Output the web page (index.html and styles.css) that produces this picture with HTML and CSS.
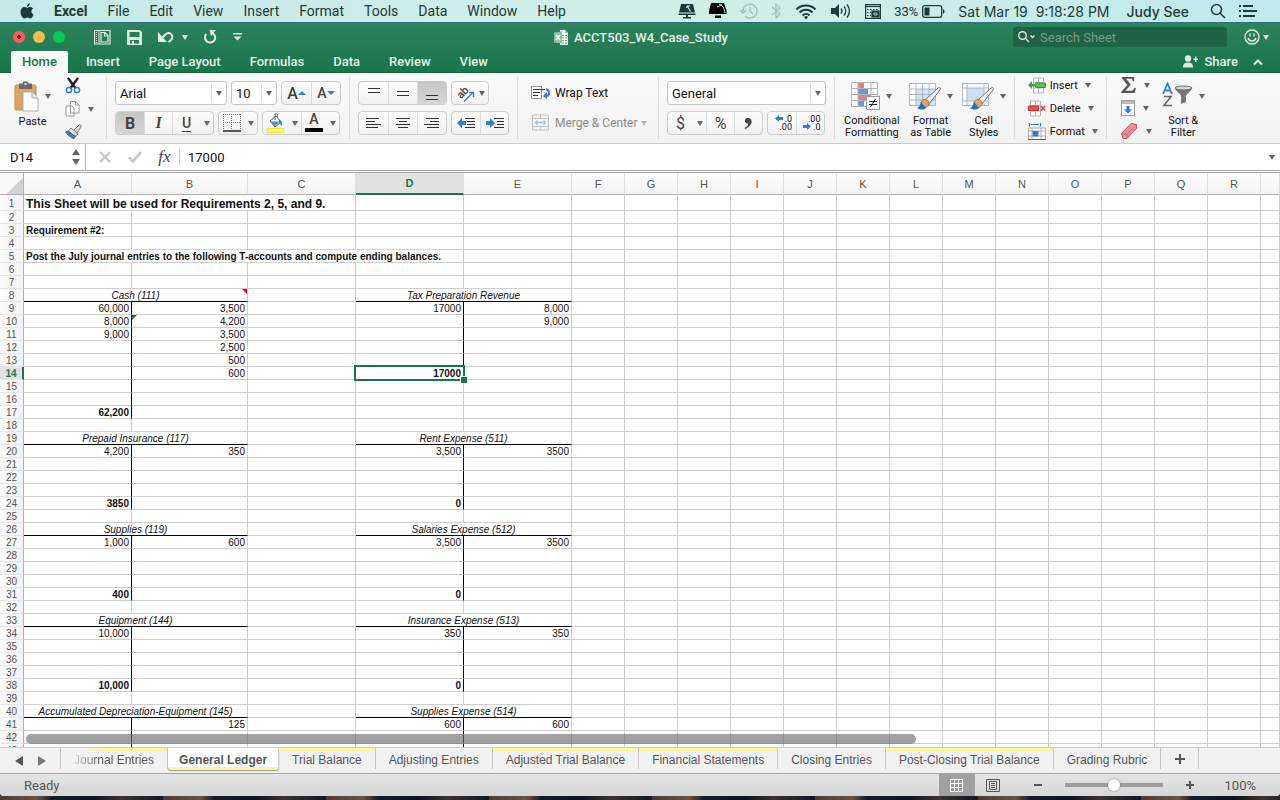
FILE: index.html
```html
<!DOCTYPE html>
<html lang="en">
<head>
<meta charset="UTF-8">
<meta name="viewport" content="width=device-width, initial-scale=1.0">
<title>ACCT503_W4_Case_Study</title>
<link rel="stylesheet" href="styles.css">
</head>
<body>
<header class="menubar">
    <nav class="menus">
        <a href="#" class="apple" aria-label="Apple menu"><svg width="14" height="17" viewBox="0 0 14 17"><path fill="#1d3a3a" d="M9.8 0.3c0.1 1.9-1.2 3.4-2.9 3.5C6.700 2.100 8.200 0.600 9.800 0.300zM7.200 4.800c0.700 0 1.500-0.800 2.900-0.800 1.300 0 2.400 0.700 3 1.600-2.500 1.600-2.100 4.800 0.500 5.900-0.700 1.900-2 4-3.400 4-1.100 0-1.500-0.700-2.900-0.700s-1.800 0.700-2.900 0.700C2.300 15.500 0.500 12 0.500 9.100c0-3.200 2-5 4-5 1.200 0 2 0.700 2.700 0.700z"/></svg></a>
        <a href="#" class="app-name">Excel</a>
        <a href="#">File</a>
        <a href="#">Edit</a>
        <a href="#">View</a>
        <a href="#">Insert</a>
        <a href="#">Format</a>
        <a href="#">Tools</a>
        <a href="#">Data</a>
        <a href="#">Window</a>
        <a href="#">Help</a>
    </nav>
    <div class="extras">
        <svg width="18" height="15" viewBox="0 0 18 15"><path fill="#1d3a3a" d="M3 0h12l2 8.500H1zM0.500 9.500h17V11h-17zM8 11h2v2h3v1.500H5V13h3z"/><path d="M9 1.500l3.500 6M8 3.500l4-2" stroke="#cdebe8" stroke-width="1.200"/></svg>
        <svg width="18" height="16" viewBox="0 0 18 16"><path d="M2 0h13l2.500 7.500V11H0V8zM6 12.500h6V15H6z"/><path d="M10 1c4 1 5 4 6 9M8 4l5-2" stroke="#cdebe8" stroke-width="1" fill="none"/></svg>
        <svg width="18" height="18" viewBox="0 0 18 18" fill="none" stroke="#9dbdbc" stroke-width="1.300"><path d="M3 9a7 7 0 1 1 2 5M0 8l3 3 3-3M10 4.500V9l3 3"/></svg>
        <svg width="11" height="16" viewBox="0 0 11 16" fill="none" stroke="#a4c4c3" stroke-width="1.300"><path d="M1 4l8 7-4 4V1l4 4-8 7"/></svg>
        <svg width="22" height="17" viewBox="0 0 22 17" fill="none" stroke="#1d3a3a" stroke-width="2"><path d="M1.500 6.500a13.500 13.500 0 0 1 19 0M4.500 9.500a9 9 0 0 1 13 0M7.500 12.500a5 5 0 0 1 7 0"/><path d="M9 14l2 2.500 2-2.500a3 3 0 0 0-4 0z" fill="#1d3a3a" stroke="none"/></svg>
        <svg width="22" height="16" viewBox="0 0 22 16" fill="none" stroke="#1d3a3a" stroke-width="1.300"><path d="M1 5h4l4-4v14l-4-4H1z" fill="#1d3a3a" stroke="none"/><path d="M11 5.500a4 4 0 0 1 0 5M14 3.500a7 7 0 0 1 0 9M17 1.500a10 10 0 0 1 0 13"/></svg>
        <svg width="16" height="15" viewBox="0 0 16 15" fill="none" stroke="#1d3a3a" stroke-width="1.200"><rect x="0.600" y="0.600" width="14.800" height="13.800"/><path d="M1 2.500h14"/><path d="M2 5.500h12M2 8.500h4M2 11.500h4" stroke-dasharray="1.500 1.500"/><path d="M7 7h7v6H7z" fill="#1d3a3a"/><path d="M9 9h3v2H9z" stroke="#cdebe8" stroke-width="0.800"/></svg>
        <span class="battery">33% <svg width="23" height="13" viewBox="0 0 23 13"><rect x="0.700" y="0.700" width="19" height="11.600" rx="2" fill="none" stroke="#1d3a3a" stroke-width="1.300"/><path fill="#1d3a3a" d="M2.500 2.500h5v8h-5zM21 4c2 1 2 4 0 5z"/></svg></span>
        <span class="clock">Sat Mar 19&nbsp; 9:18:28 PM</span>
        <span class="user">Judy See</span>
        <svg width="16" height="16" viewBox="0 0 16 16" fill="none" stroke="#1d3a3a" stroke-width="1.500"><circle cx="6.500" cy="6.500" r="5"/><path d="M10 10l5 5"/></svg>
        <svg width="18" height="12" viewBox="0 0 18 12"><path fill="#1d3a3a" d="M0 0h2v2H0zM4 0h10v2H4zM0 5h2v2H0zM4 5h14v2H4zM0 10h2v2H0zM4 10h12v2H4z"/></svg>
    </div>
</header>

<main class="window">
    <div class="title-area">
        <div class="titlebar">
            <div class="title-left">
                <button class="light red" aria-label="Close"></button>
                <button class="light yellow" aria-label="Minimize"></button>
                <button class="light green" aria-label="Zoom"></button>
                <button class="quick first" aria-label="Gallery"><svg width="17" height="15" viewBox="0 0 17 15" fill="none" stroke="#e0ebe4"><path d="M0.500 0.500h15.500v13.500H0.500z" stroke-width="1.200"/><path d="M7 2.500h4l3 3V12H7zM10.500 3v3h3" stroke-width="1.200"/><path d="M2.500 2v11" stroke-dasharray="1 1"/><path d="M5 0v14"/></svg></button>
                <button class="quick" aria-label="Save"><svg width="15" height="15" viewBox="0 0 15 15"><path fill="#e0ebe4" d="M0 0h13l2 2v13H0zM2.500 2v5h10V2zM3 10v3.500h2V11h2v2.500h5V10z" fill-rule="evenodd"/></svg></button>
                <button class="quick" aria-label="Undo"><svg width="16" height="12" viewBox="0 0 16 12"><path fill="#e0ebe4" d="M0 1v10h9z"/><path d="M3.500 7.500L7 4c4-5 10 1 6 5l-2.500 2" fill="none" stroke="#e0ebe4" stroke-width="2"/></svg><i class="arrow light-arrow"></i></button>
                <button class="quick" aria-label="Redo"><svg width="13" height="14" viewBox="0 0 13 14"><path fill="#e0ebe4" d="M5.500 0H12L7 6z"/><path d="M2 4c-2.500 4 0 8.500 4 8.500 5 0 7-6 3-9" fill="none" stroke="#e0ebe4" stroke-width="2"/></svg></button>
                <button class="quick" aria-label="Customize toolbar"><svg width="9" height="8" viewBox="0 0 9 8"><path fill="#e0ebe4" d="M0 0h9v1.500H0zM0.500 3.500h8l-4 4z"/></svg></button>
            </div>
            <div class="doc-title">
                <svg width="14" height="15" viewBox="0 0 14 15"><path d="M6 0h5l3 3v12H6z" fill="#f3f7f4"/><path d="M11 0v3h3" fill="#9bb8a6"/><path d="M8 5.500h5M8 8h5M8 10.500h5M8 13h5" stroke="#7fa892" stroke-dasharray="2 1"/><path d="M0 2.500l8-1v12l-8-1z" fill="#8fbea4"/><path d="M2 5l4 5M6 5l-4 5" stroke="#fff" stroke-width="1.400"/></svg>
                <span>ACCT503_W4_Case_Study</span>
            </div>
            <div class="title-right">
                <label class="search">
                    <svg width="18" height="12" viewBox="0 0 18 12" fill="none" stroke="#e0ebe4" stroke-width="1.400"><circle cx="4.500" cy="4.500" r="3.800"/><path d="M7.500 7.500l3.500 3.500M12.500 4.500l2 2 2-2"/></svg>
                    <input type="text" placeholder="Search Sheet" aria-label="Search Sheet">
                </label>
                <button class="smile" aria-label="Feedback"><svg width="16" height="16" viewBox="0 0 16 16" fill="none" stroke="#e0ebe4" stroke-width="1.400"><circle cx="8" cy="8" r="7"/><path d="M4 9c1 4 7 4 8 0M6 4.500v3M10 4.500v3"/></svg><i class="arrow light-arrow"></i></button>
            </div>
        </div>
        <nav class="ribbon-tabs">
            <a href="#" class="active">Home</a>
            <a href="#">Insert</a>
            <a href="#">Page Layout</a>
            <a href="#">Formulas</a>
            <a href="#">Data</a>
            <a href="#">Review</a>
            <a href="#">View</a>
            <button class="share"><svg width="15" height="13" viewBox="0 0 15 13" fill="#e0ebe4"><circle cx="5" cy="3.500" r="3.200"/><path d="M0 12.500c0-4 2-5 5-5s5 1 5 5zM10.500 3.500h1.500v-2h1.500v2H15V5h-1.500v2H12V5h-1.500z"/></svg> Share</button>
            <button class="collapse" aria-label="Collapse ribbon"><svg width="10" height="6" viewBox="0 0 10 6"><path d="M1 5.500l4-4 4 4" fill="none" stroke="#e0ebe4" stroke-width="2"/></svg></button>
        </nav>
    </div>

    <section class="ribbon">
        <div class="group clipboard">
            <button class="big"><span class="big-icon"><svg width="26" height="31" viewBox="0 0 26 31"><rect x="1" y="4" width="21" height="25" rx="1.500" fill="#dba65f" stroke="#c08a45"/><path d="M5 2.500h3.500c0-3 6-3 6 0H18V8H5z" fill="#6b6b6b"/><circle cx="11.500" cy="3" r="1.200" fill="#ddd"/><path d="M9 11h9l6 6v13H9z" fill="#fff" stroke="#aaa"/><path d="M18 11v6h6" fill="#eee" stroke="#aaa"/></svg><i class="arrow"></i></span>Paste</button>
            <div class="stack">
                <button aria-label="Cut"><svg width="16" height="17" viewBox="0 0 16 17" fill="none"><path d="M3 1l7.500 10M13 1L5.500 11" stroke="#222" stroke-width="2.400"/><circle cx="4" cy="13" r="2.600" stroke="#2e80d0" stroke-width="1.500"/><circle cx="12" cy="13" r="2.600" stroke="#2e80d0" stroke-width="1.500"/></svg></button>
                <button aria-label="Copy"><svg width="15" height="16" viewBox="0 0 15 16" fill="#fff" stroke="#999"><path d="M1 5h6l2 2v8H1zM5.500 0.500h5l3.500 3.500v8H5.500z"/><path d="M10.500 0.500v3.500h3.500" fill="none"/></svg><i class="arrow"></i></button>
                <button aria-label="Format painter"><svg width="17" height="15" viewBox="0 0 17 15"><path d="M9 6l5-5c1-1 3 1 2 2l-4 6z" fill="#ddd" stroke="#777"/><path d="M6 4l7 6-3 2.500-7-5z" fill="#e8e8e8" stroke="#777"/><path d="M0.500 8l3-1 7 5.500-2 2.500C6 13 4 12 3 11z" fill="#3a82bd" stroke="#345" stroke-width="0.600"/></svg></button>
            </div>
        </div>

        <div class="group">
            <div class="tools">
                <span class="combo font-name"><select aria-label="Font"><option>Arial</option></select></span>
                <span class="combo font-size"><select aria-label="Font size"><option>10</option></select></span>
                <span class="buttons">
                    <button class="letter" aria-label="Increase font size">A<i class="tri up"></i></button>
                    <button class="letter small" aria-label="Decrease font size">A<i class="tri down"></i></button>
                </span>
            </div>
            <div class="tools">
                <span class="buttons tight">
                    <button class="letter pressed">B</button>
                    <button class="letter italic">I</button>
                    <button class="letter under">U</button>
                    <button class="drop" aria-label="Underline options"><i class="arrow"></i></button>
                </span>
                <span class="buttons">
                    <button class="narrow" aria-label="Borders"><svg width="18" height="18" viewBox="0 0 18 18" fill="none" stroke="#777"><path d="M0.500 0v16M8.500 0v16M17.500 0v16M0 0.500h18M0 8.500h18" stroke-dasharray="1 1"/><path d="M0 17h18" stroke="#222" stroke-width="1.500"/></svg></button>
                    <button class="drop" aria-label="Border options"><i class="arrow"></i></button>
                </span>
                <span class="buttons">
                    <button class="narrow" aria-label="Fill color"><svg width="19" height="20" viewBox="0 0 19 20"><path d="M4 8l6-5 5 6-6 5z" fill="#fff" stroke="#555"/><path d="M4 8.500h10L9 13z" fill="#4e8fc8"/><path d="M9 7V1c2-1 3 1 2 3" fill="none" stroke="#555"/><path d="M13 7c3 0 3 3 3 6-2-1-2-3-3-4z" fill="#2f80d0"/><path d="M1 15.500h17v4H1z" fill="#fcfb45" stroke="#ddd72f" stroke-width="0.600"/></svg></button>
                    <button class="drop" aria-label="Fill color options"><i class="arrow"></i></button>
                    <button class="letter narrow font-color" aria-label="Font color">A</button>
                    <button class="drop" aria-label="Font color options"><i class="arrow"></i></button>
                </span>
            </div>
        </div>

        <div class="group">
            <div class="tools">
                <span class="buttons">
                    <button aria-label="Top align"><svg width="14" height="14"><path d="M1 2.500h12M1 6.500h12" stroke="#333"/></svg></button>
                    <button aria-label="Middle align"><svg width="14" height="14"><path d="M1 5.500h12M1 9.500h12" stroke="#333"/></svg></button>
                    <button class="pressed" aria-label="Bottom align"><svg width="14" height="14"><path d="M1 9.500h12M1 13.500h12" stroke="#333"/></svg></button>
                </span>
                <span class="buttons">
                    <button class="wide" aria-label="Orientation"><svg width="19" height="20" viewBox="0 0 19 20"><text x="1" y="13" transform="rotate(-45 7 10)" font-size="11" font-weight="500" font-family="Roboto, sans-serif" fill="#444">ab</text><path d="M8 18.500l9-9M13 9.500h4.500V14" fill="none" stroke="#2f80d0" stroke-width="1.300"/></svg><i class="arrow"></i></button>
                </span>
            </div>
            <div class="tools">
                <span class="buttons">
                    <button aria-label="Align left"><svg width="16" height="12"><path d="M0 1.500h13M0 4.500h9M0 7.500h15M0 10.500h12" stroke="#333"/></svg></button>
                    <button aria-label="Center"><svg width="16" height="12"><path d="M1 1.500h14M4 4.500h8M1 7.500h14M3 10.500h10" stroke="#333"/></svg></button>
                    <button aria-label="Align right"><svg width="16" height="12"><path d="M2 1.500h13M6 4.500h9M0 7.500h15M3 10.500h12" stroke="#333"/></svg></button>
                </span>
                <span class="buttons tight">
                    <button aria-label="Decrease indent"><svg width="18" height="12"><path d="M8 1.500h10M10 4.500h8M10 7.500h8M8 10.500h10" stroke="#333"/><path d="M0 6l5-5v3h4v4H5v3z" fill="#2f80d0"/></svg></button>
                    <button aria-label="Increase indent"><svg width="18" height="12"><path d="M8 1.500h10M11 4.500h7M11 7.500h7M8 10.500h10" stroke="#333"/><path d="M9 6L4 1v3H0v4h4v3z" fill="#2f80d0"/></svg></button>
                </span>
            </div>
        </div>

        <div class="group wrap">
            <button class="line"><svg width="20" height="14" viewBox="0 0 20 14"><rect x="0.500" y="0.500" width="10" height="12" fill="#fff" stroke="#999"/><path d="M2 3.500h12M2 6.500h7M2 9.500h5" stroke="#333"/><path d="M15 3c4 1 4 7 0 7" fill="none" stroke="#2f80d0" stroke-width="2"/><path d="M16 6v7l-4-3z" fill="#2f80d0"/></svg><span>Wrap Text</span></button>
            <button class="line faded"><svg width="20" height="18" viewBox="0 0 20 18"><path d="M1.500 1h16v15h-16zM1 4.500h16M1 12.500h16M9.500 1v3.500M9.500 12.500V16" fill="none" stroke="#c2c2c2"/><path d="M4.500 8.500h10M6.500 6.500l-2 2 2 2M12.500 6.500l2 2-2 2" fill="none" stroke="#9ec5e8" stroke-width="1.300"/></svg><span>Merge &amp; Center</span><i class="arrow"></i></button>
        </div>

        <div class="group">
            <div class="tools">
                <span class="combo number-format"><select aria-label="Number format"><option>General</option></select></span>
            </div>
            <div class="tools">
                <span class="buttons tight">
                    <button class="sign narrow">$</button>
                    <button class="drop" aria-label="Currency options"><i class="arrow"></i></button>
                    <button class="sign">%</button>
                    <button aria-label="Comma style"><svg width="9" height="13" viewBox="0 0 9 13"><path d="M3 1c6-1 7 7-2 11l-0.500-1c3-1.500 4-3 3.500-4.500C0 7 0 1.500 3 1z" fill="#444"/></svg></button>
                </span>
                <span class="buttons tight">
                    <button class="decimals" aria-label="Increase decimal"><span><svg width="8" height="7"><path d="M0 3.500L4 0v2h4v3H4v2z" fill="#2f80d0"/></svg>.0</span><span>.00</span></button>
                    <button class="decimals" aria-label="Decrease decimal"><span>.00</span><span><svg width="8" height="7"><path d="M8 3.500L4 0v2H0v3h4v2z" fill="#2f80d0"/></svg>.0</span></button>
                </span>
            </div>
        </div>

        <div class="group styles">
            <button class="big"><span class="big-icon"><svg width="30" height="28" viewBox="0 0 30 28"><path d="M0.500 0.500h26v24H0.500z" fill="#fff"/><path d="M7 1h6v5H7z" fill="#ef7c7c"/><path d="M7 6h10v6H7z" fill="#5ba1e0"/><path d="M7 12h13v6H7z" fill="#ef7c7c"/><path d="M7 18h6v6H7z" fill="#5ba1e0"/><path d="M0.500 0.500h26v24H0.500zM7 0v24M20 0v24M0 6.500h26M0 12.500h26M0 18.500h26" fill="none" stroke="#b5b5b5"/><rect x="15.500" y="14.500" width="13" height="13" fill="#fff" stroke="#999"/><path d="M18 19.500h8M18 22.500h8M24.500 17l-5 8" stroke="#222"/></svg><i class="arrow"></i></span>Conditional<br>Formatting</button>
            <button class="big"><span class="big-icon"><svg width="33" height="28" viewBox="0 0 33 28"><path d="M0.500 1.500h26v22H0.500z" fill="#fff"/><path d="M7 7h19v16H7z" fill="#cfe2f5"/><path d="M0.500 1.500h26v22H0.500zM7 1v22M13.500 1v22M20 1v22M0 7h26M0 12.500h26M0 18h26" fill="none" stroke="#a9b7c3"/><path d="M16 18L29 6c2-1 3 0 2 2L20 22z" fill="#eee" stroke="#777"/><path d="M12 20c3-5 9-2 8 3-2 3-5 3-7 2z" fill="#dba56a" stroke="#a87940"/><path d="M8 26c3-1 3-4 4-6l5 6c-2 2-6 2-9 0z" fill="#2474c6"/></svg><i class="arrow"></i></span>Format<br>as Table</button>
            <button class="big"><span class="big-icon"><svg width="33" height="28" viewBox="0 0 33 28"><path d="M0.500 1.500h26v22H0.500z" fill="#fff"/><path d="M5 6h17v13H5z" fill="#cfe2f5"/><path d="M0.500 1.500h26v22H0.500zM5 1v22M22 1v22M0 6h26M0 19h26" fill="none" stroke="#a9b7c3"/><path d="M16 18L29 6c2-1 3 0 2 2L20 22z" fill="#eee" stroke="#777"/><path d="M12 20c3-5 9-2 8 3-2 3-5 3-7 2z" fill="#dba56a" stroke="#a87940"/><path d="M8 26c3-1 3-4 4-6l5 6c-2 2-6 2-9 0z" fill="#2474c6"/></svg><i class="arrow"></i></span>Cell<br>Styles</button>
        </div>

        <div class="group cells">
            <button class="line"><svg width="18" height="17" viewBox="0 0 18 17"><path d="M5.500 1h10v15h-10zM10.500 1v15M5 5.500h11M5 11h11" fill="#fff" stroke="#b5b5b5"/><path d="M7.500 6h10v4.500h-10z" fill="#5fbb62" stroke="#3c9544"/><path d="M0 8l4-4v3h4v2.500H4V12z" fill="#3ea64a"/></svg><span>Insert</span><i class="arrow"></i></button>
            <button class="line"><svg width="18" height="17" viewBox="0 0 18 17"><path d="M2.500 1h10v15h-10zM7.500 1v15M2 5.500h11M2 11h11" fill="#fff" stroke="#b5b5b5"/><path d="M0.500 6h10v4.500h-10z" fill="#e35252" stroke="#b93434"/><path d="M13 6l4 4.500M17 6l-4 4.500" stroke="#d44" stroke-width="1.700"/></svg><span>Delete</span><i class="arrow"></i></button>
            <button class="line"><svg width="18" height="17" viewBox="0 0 18 17"><path d="M1.500 0v3.500M12.500 0v3.500M3 1.500h8" stroke="#2f80d0" stroke-width="1.200"/><path d="M0.500 5h17v11.500H0.500zM4 5v11M13 5v11M0 8h18M0 13h18" fill="#fff" stroke="#aaa"/><path d="M4.500 8h6v5.500h-6z" fill="#3980bd"/><path d="M0 16.500h18" stroke="#666"/></svg><span>Format</span><i class="arrow"></i></button>
        </div>

        <div class="group editing">
            <div class="stack">
                <button aria-label="AutoSum"><svg width="15" height="16" viewBox="0 0 15 16"><path d="M1 0h12v4h-1c-0.500-2-1-2.500-3-2.500H4.500l5 6-5.500 6.500h6c2 0 3-1 3.500-3h1L13.500 16H0.500v-1l6-7L1 1z" fill="#555" stroke="#555" stroke-width="0.500"/></svg><i class="arrow"></i></button>
                <button aria-label="Fill"><svg width="14" height="16" viewBox="0 0 14 16"><path d="M0.500 0.500h13v15H0.500z" fill="#fff" stroke="#999"/><path d="M1 1h12v3H1z" fill="#bbb"/><path d="M5.500 6h3v3.500H11l-4 4-4-4h2.500z" fill="#2f78bd"/></svg><i class="arrow"></i></button>
                <button aria-label="Clear"><svg width="17" height="16" viewBox="0 0 17 16"><path d="M0.500 10.500L10 0.500l5.500 1V5.500L6 15.500H2z" fill="#f08d9d" stroke="#b75768"/><path d="M0.500 10.500l5.500 1 9.500-10M6 11.500v4" fill="none" stroke="#cf6b7d"/></svg><i class="arrow"></i></button>
            </div>
            <button class="big"><span class="big-icon"><svg width="32" height="28" viewBox="0 0 32 28"><path d="M1 12L5.500 1.500 10 12M2.500 8.500h6" fill="none" stroke="#2f80d0" stroke-width="1.800"/><path d="M2 14.500h7L2 23.500h8" fill="none" stroke="#666" stroke-width="1.600"/><path d="M13 6c0 3 6 6 6 8v8l5-2v-6c0-2 6-5 6-8z" fill="#777"/><ellipse cx="21.500" cy="6" rx="8.500" ry="2" fill="#d5d5d5" stroke="#666"/></svg><i class="arrow"></i></span>Sort &amp;<br>Filter</button>
        </div>
    </section>

    <section class="formula-bar">
        <input class="name-box" type="text" value="D14" aria-label="Name box">
        <span class="stepper"><i class="tri"></i><i class="tri"></i></span>
        <button aria-label="Cancel"><svg width="12" height="12"><path d="M1 1l10 10M11 1L1 11" stroke="#c4c4c4" stroke-width="2.200"/></svg></button>
        <button aria-label="Enter"><svg width="14" height="12"><path d="M1 6.500l4 4 8-9.500" fill="none" stroke="#c4c4c4" stroke-width="2.500"/></svg></button>
        <button class="fx" aria-label="Insert function">fx</button>
        <input class="formula" type="text" value="17000" aria-label="Formula">
        <button aria-label="Expand formula bar"><i class="arrow"></i></button>
    </section>

    <section class="sheet">
        <table id="grid"></table>
        <div class="scrollbar"></div>
    </section>

    <nav class="sheet-tabs">
        <button class="nav prev" aria-label="Previous sheet"><svg width="8" height="12"><path d="M8 1v10L0 6z" fill="#555"/></svg></button>
        <button class="nav" aria-label="Next sheet"><svg width="8" height="12"><path d="M0 1v10l8-5z" fill="#777"/></svg></button>
        <a href="#" class="cut"><span>Journal Entries</span></a>
        <a href="#" class="current">General Ledger</a>
        <a href="#" class="colored">Trial Balance</a>
        <a href="#">Adjusting Entries</a>
        <a href="#" class="colored">Adjusted Trial Balance</a>
        <a href="#" class="colored">Financial Statements</a>
        <a href="#">Closing Entries</a>
        <a href="#" class="colored">Post-Closing Trial Balance</a>
        <a href="#">Grading Rubric</a>
        <button class="add" aria-label="Add sheet"><svg width="10" height="10"><path d="M5 0v10M0 5h10" stroke="#555" stroke-width="2"/></svg></button>
    </nav>

    <footer class="status">
        <span class="ready">Ready</span>
        <button class="view on" aria-label="Normal view"><svg width="13" height="13"><path fill="#fff" d="M0 0h13v13H0z"/><path d="M1 1h3v3H1zM5 1h3v3H5zM9 1h3v3H9zM1 5h3v3H1zM5 5h3v3H5zM9 5h3v3H9zM1 9h3v3H1zM5 9h3v3H5zM9 9h3v3H9z" fill="#999"/></svg></button>
        <button class="view" aria-label="Page layout view"><svg width="14" height="13" fill="none" stroke="#555"><path d="M0.500 0.500h13v12H0.500zM3.500 2.500h7v8h-7zM5 4.500h4M5 6.500h4M5 8.500h4"/></svg></button>
        <button class="zoom" aria-label="Zoom out"><svg width="8" height="8"><path d="M0 4h8" stroke="#555" stroke-width="2"/></svg></button>
        <input class="slider" type="range" min="0" max="200" value="100" aria-label="Zoom">
        <button class="zoom" aria-label="Zoom in"><svg width="8" height="8"><path d="M0 4h8M4 0v8" stroke="#555" stroke-width="2"/></svg></button>
        <span class="percent">100%</span>
    </footer>
</main>
<script src="sheet.js"></script>
</body>
</html>
```

FILE: styles.css
```css
* {
    box-sizing: border-box;
}
body {
    margin: 0;
    height: 100vh;
    display: flex;
    flex-direction: column;
    overflow: hidden;
    font-family: Roboto, "Liberation Sans", sans-serif;
    font-size: 12px;
    color: #111;
    background: repeating-linear-gradient(90deg, #4a3b38 0, #6b5046 37px, #171b26 52px, #10141f 94px, #3a322f 121px, #141824 163px);
}
a {
    color: inherit;
    text-decoration: none;
}
button {
    padding: 0;
    border: none;
    background: none;
    font: inherit;
    color: inherit;
    display: flex;
    align-items: center;
    justify-content: center;
}
svg {
    display: block;
    flex: none;
}

/* mac menu bar */
.menubar {
    display: flex;
    justify-content: space-between;
    height: 23px;
    background: linear-gradient(90deg, #c4e9e8, #cfeeea 40%, #d0eee8 60%, #bfe9ec);
    border-bottom: 1px solid #2b7378;
    font-size: 14px;
    color: #1d3a3a;
}
.menus, .extras {
    display: flex;
    align-items: center;
    gap: 20px;
    white-space: nowrap;
}
.menus {
    padding-left: 20px;
}
.app-name {
    font-weight: 700;
}
.extras {
    gap: 13px;
    padding-right: 23px;
}
.battery {
    display: flex;
    align-items: center;
    gap: 4px;
    font-size: 13px;
}
.clock, .user {
    font-family: Inter, Roboto, sans-serif;
    font-size: 14px;
}
.user {
    font-weight: 500;
    margin: 0 8px 0 4px;
}

/* green title area */
.window {
    flex: 1;
    min-height: 0;
    display: flex;
    flex-direction: column;
    margin-bottom: 4px;
    border-radius: 0 0 4px 4px;
    overflow: hidden;
    background: #fff;
}
.title-area {
    background: linear-gradient(#2d835c, #19754b);
    color: #e6f0ea;
    border-bottom: 1px solid #116640;
}
.titlebar {
    display: flex;
    align-items: center;
    height: 28px;
}
.title-left, .title-right {
    flex: 1;
    display: flex;
    align-items: center;
}
.title-left {
    gap: 8px;
    padding-left: 13px;
}
.light {
    width: 12px;
    height: 12px;
    border-radius: 50%;
}
.red {
    background: radial-gradient(#5a0a08 0 2px, #fc5b57 2px);
}
.yellow {
    background: #fdbb45;
}
.green {
    background: #06c956;
}
.quick {
    gap: 8px;
    margin-right: 8px;
}
.quick.first {
    margin-left: 21px;
}
.doc-title {
    display: flex;
    align-items: center;
    gap: 6px;
    font-size: 13px;
    font-weight: 500;
}
.title-right {
    justify-content: flex-end;
    padding-right: 11px;
    gap: 17px;
}
.search {
    display: flex;
    align-items: center;
    gap: 4px;
    width: 214px;
    height: 20px;
    padding-left: 5px;
    border-radius: 3px;
    background: #1e6345;
}
.search input {
    flex: 1;
    min-width: 0;
    padding: 0;
    border: none;
    outline: none;
    background: none;
    color: #fff;
    font: 13px Roboto, sans-serif;
}
.search input::placeholder {
    color: #719b87;
}
.smile {
    gap: 3px;
}
.arrow {
    flex: none;
    border: 3px solid transparent;
    border-top: 5px solid #666;
    border-bottom: none;
}
.light-arrow {
    border-top-color: #e0ebe4;
}
.ribbon-tabs {
    display: flex;
    height: 21px;
    padding-left: 11px;
    gap: 7px;
    font-size: 13px;
    font-weight: 500;
}
.ribbon-tabs a {
    padding: 0 11px;
    line-height: 21px;
}
.ribbon-tabs .active {
    background: #fafafa;
    color: #19754b;
    border-radius: 2px 2px 0 0;
    margin-bottom: -1px;
}
.share {
    margin-left: auto;
    gap: 6px;
}
.collapse {
    margin: 0 17px 0 8px;
}

/* ribbon */
.ribbon {
    display: flex;
    align-items: center;
    height: 71px;
    background: linear-gradient(#fafafa, #f2f2f2);
    border-bottom: 1px solid #c8c8c8;
}
.group {
    display: flex;
    flex-direction: column;
    gap: 6px;
    height: 62px;
    padding: 4px 8px;
    border-right: 1px solid #dcdcdc;
    white-space: nowrap;
}
.tools {
    display: flex;
    gap: 4px;
}
.combo {
    position: relative;
    display: block;
    height: 24px;
    border: 1px solid #c4c4c4;
    border-radius: 3px;
    background: #fff;
}
.combo select {
    width: 100%;
    height: 100%;
    padding: 0 4px;
    border: none;
    background: linear-gradient(#ddd, #ddd) right 14px center / 1px 18px no-repeat;
    appearance: none;
    font: 13px Roboto, sans-serif;
    color: #111;
}
/* arrow at the end of a drop-down */
.combo::after {
    content: "";
    position: absolute;
    right: 4px;
    top: 9px;
    border: 3px solid transparent;
    border-top: 5px solid #666;
    border-bottom: none;
}
.font-name {
    width: 112px;
}
.font-size {
    width: 46px;
}
.number-format {
    width: 159px;
}
.buttons {
    display: flex;
    height: 24px;
    border: 1px solid #cdcdcd;
    border-radius: 4px;
    background: linear-gradient(#fdfdfd, #f1f1f1);
    overflow: hidden;
}
.buttons button {
    width: 29px;
    border-left: 1px solid #dcdcdc;
}
.tight button {
    width: 28px;
}
.buttons button:first-child {
    border-left: none;
}
.buttons .narrow {
    width: 25px;
}
.buttons .drop {
    width: 13px;
    border-left: none;
}
.buttons .wide {
    width: 36px;
    gap: 4px;
}
.buttons .pressed {
    background: linear-gradient(#c6c6c6, #d6d6d6);
}
.letter {
    font-size: 16px;
    font-weight: 500;
    color: #444;
}
.letter.small {
    font-size: 14px;
}
.letter.pressed {
    font-weight: 700;
}
.letter.italic {
    font-family: "Liberation Serif", serif;
    font-style: italic;
    font-weight: 700;
}
.letter.under {
    font-size: 14px;
    text-decoration: underline;
    text-underline-offset: 3px;
}
.letter.font-color {
    font-size: 14px;
    line-height: 15px;
    align-items: flex-start;
    background: linear-gradient(#000, #000) center 16px / 18px 4px no-repeat;
}
.tri {
    border: 4px solid transparent;
}
.tri.up {
    border-bottom: 4px solid #2f80d0;
    border-top: none;
}
.tri.down {
    border-top: 4px solid #2f80d0;
    border-bottom: none;
}
.sign {
    font-size: 16px;
    color: #444;
}
.decimals {
    flex-direction: column;
    font-size: 9px;
    line-height: 8px;
}
.decimals span {
    display: flex;
    justify-content: flex-end;
    width: 20px;
    gap: 2px;
}
.big {
    flex-direction: column;
    justify-content: flex-start;
    line-height: 12px;
    font-size: 11px;
}
.big-icon {
    display: flex;
    align-items: center;
    gap: 5px;
    height: 31px;
    margin-bottom: 4px;
}
.stack {
    display: flex;
    flex-direction: column;
    justify-content: space-between;
    align-items: flex-start;
}
.stack button {
    gap: 8px;
}
.clipboard, .styles, .editing {
    flex-direction: row;
    padding-top: 0;
    padding-bottom: 0;
}
.group .big {
    padding-top: 4px;
}
.clipboard {
    gap: 14px;
    width: 107px;
    padding-left: 14px;
}
.styles {
    gap: 9px;
    padding-left: 9px;
}
.editing {
    gap: 10px;
    padding-left: 14px;
    border-right: none;
}
.line {
    gap: 4px;
    font-size: 11px;
}
.wrap {
    width: 141px;
    align-items: flex-start;
    padding-left: 13px;
}
.wrap .line {
    font-size: 12px;
    height: 24px;
}
.faded {
    color: #8b8b8b;
}
.faded .arrow {
    border-top-color: #b5b5b5;
}
.cells {
    width: 92px;
    padding: 0 0 0 13px;
    align-items: flex-start;
}
.cells span {
    margin-right: 3px;
}

/* formula bar */
.formula-bar {
    display: flex;
    align-items: center;
    height: 29px;
    padding-right: 5px;
    border-bottom: 3px double #a9a9a9;
    background: #fff;
}
.formula-bar input {
    min-width: 0;
    height: 26px;
    padding: 0;
    border: none;
    outline: none;
    font: 13px Roboto, sans-serif;
    color: #111;
}
.formula-bar .name-box {
    width: 70px;
    padding-left: 10px;
}
.formula-bar button {
    width: 30px;
}
.stepper {
    display: flex;
    flex-direction: column;
    gap: 4px;
    width: 16px;
    height: 26px;
    padding: 5px 0 0 2px;
    margin-right: 4px;
    border-right: 1px solid #bbb;
}
.stepper .tri {
    align-self: flex-start;
    border-top: none;
    border-bottom: 6px solid #666;
}
.stepper .tri + .tri {
    border-bottom: none;
    border-top: 6px solid #666;
}
.formula-bar .fx {
    height: 16px;
    border-right: 1px solid #ccc;
    font: italic 17px "Liberation Serif", serif;
    color: #444;
}
.formula-bar .formula {
    flex: 1;
    padding-left: 8px;
}
.formula-bar button:last-child {
    width: 6px;
}

/* cells */
.sheet {
    position: relative;
    flex: 1;
    min-height: 0;
    overflow: hidden;
    font-family: "Liberation Sans", Arial, sans-serif;
}
#grid {
    width: 100%;
    table-layout: fixed;
    border-collapse: separate;
    border-spacing: 0;
    font-size: 10px;
    line-height: 10px;
}
#grid td, #grid th {
    height: 13px;
    padding: 2px 2px 0;
    border-right: 1px solid #cecece;
    border-bottom: 1px solid #cecece;
    white-space: nowrap;
    font-weight: 400;
}
.row-col {
    width: 24px;
}
.wide-col {
    width: 108px;
}
.wider-col {
    width: 116px;
}
.small-col {
    width: 53px;
}
#grid thead th {
    height: 22px;
    padding: 0;
    font-size: 11px;
    color: #555;
    background: linear-gradient(#fdfdfd, #f3f3f3);
    border-right-color: #e0e0e0;
    border-bottom-color: #b0b0b0;
}
#grid tbody th {
    padding: 2px 0 0;
    color: #555;
    background: linear-gradient(90deg, #fcfcfc, #f2f2f2);
    border-right-color: #b0b0b0;
    border-bottom-color: #e6e6e6;
}
#grid thead .picked {
    border-bottom: 2px solid #19754b;
}
#grid tbody .picked {
    border-right: 2px solid #19754b;
}
#grid .picked {
    background: #e2e2e2;
    color: #19754b;
    font-weight: 700;
}
#grid .corner {
    background: linear-gradient(135deg, #f8f8f8 62%, #d2d2d2 62%);
    border-right-color: #b0b0b0;
}
#grid .first-row td, #grid .first-row th {
    height: 16px;
}
#grid .num {
    text-align: right;
}
#grid .bold, #grid .heading {
    font-weight: 700;
}
#grid .heading {
    font-size: 12px;
}
#grid .account {
    text-align: center;
    font-style: italic;
    border-bottom-color: #000;
}
#grid .stem {
    border-right-color: #000;
}
#grid .note, #grid .warn, #grid .selected {
    position: relative;
}
.note::after, .warn::after {
    content: "";
    position: absolute;
    top: 0;
}
.note::after {
    right: 0;
    border-top: 5px solid #e3001b;
    border-left: 5px solid transparent;
}
.warn::after {
    left: 0;
    border-top: 5px solid #137a2c;
    border-right: 5px solid transparent;
}
.selected::after {
    content: "";
    position: absolute;
    inset: -2px;
    border: 2px solid #19754b;
}
.selected::before {
    content: "";
    position: absolute;
    right: -4px;
    bottom: -4px;
    width: 6px;
    height: 6px;
    z-index: 1;
    background: #19754b;
    border: 1px solid #fff;
    border-width: 1px 0 0 1px;
}
.scrollbar {
    position: absolute;
    left: 26px;
    right: 364px;
    bottom: 3px;
    height: 10px;
    border-radius: 5px;
    background: rgba(110, 110, 110, 0.65);
}

/* sheet tabs */
.sheet-tabs {
    display: flex;
    height: 26px;
    background: #f1f1f1;
    border-top: 1px solid #cfcfcf;
    color: #555;
    font: 12px "Liberation Sans", Arial, sans-serif;
    white-space: nowrap;
}
.sheet-tabs a, .sheet-tabs .add {
    height: 21px;
    padding: 0 13px;
    line-height: 24px;
    border-right: 1px solid #c6c6c6;
}
.sheet-tabs .colored {
    background: linear-gradient(#f8f49c, #f8f49c) top / 100% 3px no-repeat;
}
.nav {
    width: 23px;
}
.prev {
    margin-left: 7px;
}
.sheet-tabs .cut {
    margin-left: 7px;
    border-left: 1px solid #c6c6c6;
    background: linear-gradient(90deg, transparent 18%, #f8f49c 45%) top / 100% 3px no-repeat;
}
/* first tab fades out under the arrows */
.cut span {
    -webkit-mask-image: linear-gradient(90deg, rgba(0, 0, 0, 0.2), #000 35%);
    mask-image: linear-gradient(90deg, rgba(0, 0, 0, 0.2), #000 35%);
}
.sheet-tabs .current {
    height: 22px;
    padding: 0 11px;
    background: #fff;
    border-bottom: 3px solid #fbf88c;
    border-radius: 0 0 3px 3px;
    box-shadow: 0 1px 1px #999;
    font-weight: 700;
}
.sheet-tabs .add {
    width: 38px;
}

/* status bar */
.status {
    display: flex;
    align-items: center;
    height: 23px;
    padding: 0 24px;
    background: linear-gradient(#e4e4e4, #d6d6d6);
    border-top: 1px solid #a5a5a5;
    color: #555;
    font-size: 13px;
}
.ready {
    flex: 1;
}
.view {
    width: 36px;
    height: 22px;
}
.on {
    background: #a0a0a0;
}
.zoom {
    width: 54px;
}
.slider {
    appearance: none;
    width: 98px;
    height: 12px;
    margin: 0;
    border-radius: 2px;
    background: linear-gradient(#9c9c9c, #9c9c9c) center / 100% 4px no-repeat;
}
.slider::-webkit-slider-thumb {
    appearance: none;
    width: 12px;
    height: 12px;
    border-radius: 50%;
    background: #fff;
    box-shadow: 0 0 2px #777;
}
.percent {
    margin-left: 8px;
}
```

FILE: sheet.js
```js
var columns = "ABCDEFGHIJKLMNOPQR".split("").concat("");
var rowCount = 43;
var selected = { col: "D", row: 14 };

// text, class and how many columns the cell covers
var cells = {
    A1: ["This Sheet will be used for Requirements 2, 5, and 9.", "heading", 3],
    A3: ["Requirement #2:", "bold"],
    A5: ["Post the July journal entries to the following T-accounts and compute ending balances.", "bold", 4],

    A8: ["Cash (111)", "account note", 2],
    A9: ["60,000"], A10: ["8,000"], A11: ["9,000"], A17: ["62,200", "bold"],
    B9: ["3,500"], B10: ["4,200", "warn"], B11: ["3,500"], B12: ["2,500"], B13: ["500"], B14: ["600"],
    D8: ["Tax Preparation Revenue", "account", 2],
    D9: ["17000"], D14: ["17000", "bold selected"],
    E9: ["8,000"], E10: ["9,000"],

    A19: ["Prepaid Insurance (117)", "account", 2],
    A20: ["4,200"], B20: ["350"], A24: ["3850", "bold"],
    D19: ["Rent Expense (511)", "account", 2],
    D20: ["3,500"], E20: ["3500"], D24: ["0", "bold"],

    A26: ["Supplies (119)", "account", 2],
    A27: ["1,000"], B27: ["600"], A31: ["400", "bold"],
    D26: ["Salaries Expense (512)", "account", 2],
    D27: ["3,500"], E27: ["3500"], D31: ["0", "bold"],

    A33: ["Equipment (144)", "account", 2],
    A34: ["10,000"], A38: ["10,000", "bold"],
    D33: ["Insurance Expense (513)", "account", 2],
    D34: ["350"], E34: ["350"], D38: ["0", "bold"],

    A40: ["Accumulated Depreciation-Equipment (145)", "account", 2],
    B41: ["125"],
    D40: ["Supplies Expense (514)", "account", 2],
    D41: ["600"], E41: ["600"]
};

// rows where the T-account line runs down
var stems = {
    A: [[9, 17], [20, 24], [27, 31], [34, 38], [41, 43]],
    D: [[9, 13], [20, 24], [27, 31], [34, 38], [41, 43]]
};

function hasStem(col, row) {
    return (stems[col] || []).some(range => row >= range[0] && row <= range[1]);
}

function columnClass(col) {
    if (col === "") return "";
    if (col === "B") return "wider-col";
    return "ACDE".includes(col) ? "wide-col" : "small-col";
}

var html = '<colgroup><col class="row-col">';
columns.forEach(col => html += '<col class="' + columnClass(col) + '">');
html += '</colgroup><thead><tr><th class="corner"></th>';
columns.forEach(col => html += '<th class="' + (col === selected.col ? "picked" : "") + '">' + col + '</th>');
html += '</tr></thead><tbody>';

for (var row = 1; row <= rowCount; row++) {
    html += '<tr class="' + (row === 1 ? "first-row" : "") + '">';
    html += '<th class="' + (row === selected.row ? "picked" : "") + '">' + row + '</th>';
    for (var i = 0; i < columns.length; i++) {
        var cell = cells[columns[i] + row] || [""];
        var names = [cell[1] || ""];
        if (/^[\d,]+$/.test(cell[0])) names.push("num");
        if (hasStem(columns[i], row)) names.push("stem");
        html += '<td class="' + names.join(" ").trim() + '" colspan="' + (cell[2] || 1) + '">' + cell[0] + '</td>';
        i += (cell[2] || 1) - 1;
    }
    html += '</tr>';
}
document.getElementById("grid").innerHTML = html + '</tbody>';
```
